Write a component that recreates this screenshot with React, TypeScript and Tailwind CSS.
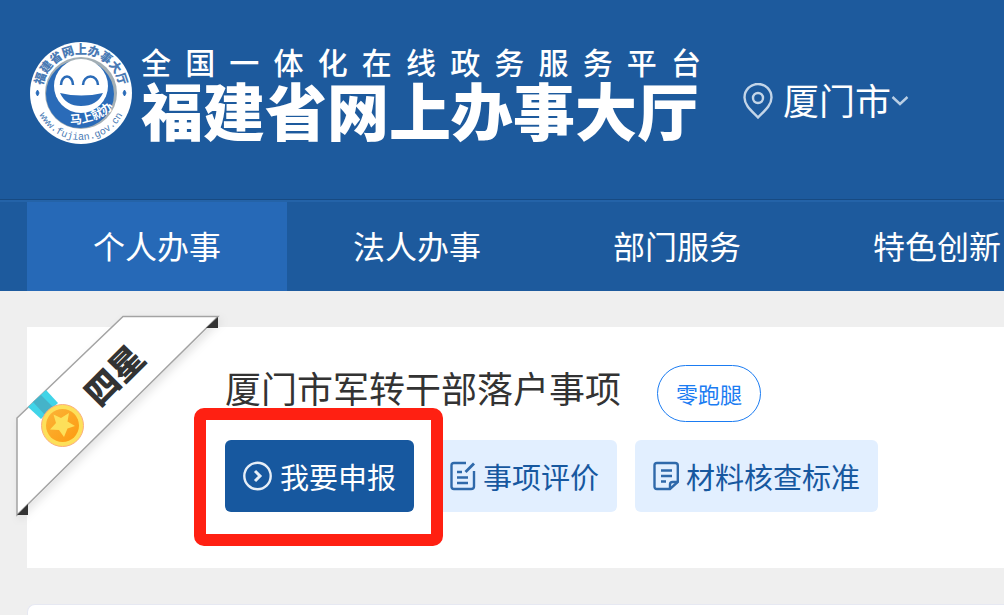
import type { ReactNode } from 'react';

const navItems = ['个人办事', '法人办事', '部门服务', '特色创新'];

function LogoIcon() {
  return (
    <svg viewBox="0 0 104 104" className="h-[104px] w-[104px] shrink-0" aria-hidden="true">
      <defs>
        <path id="ring-top" d="M 13 52 A 39 39 0 0 1 91 52" />
        <path id="ring-bottom" d="M 5 52 A 47 47 0 0 0 99 52" />
        <path id="motto" d="M 38 83 Q 68 84 88 64" />
      </defs>
      <circle cx="52" cy="52" r="51" fill="#fff" />
      <circle cx="52" cy="52" r="36" fill="#a3afb5" />
      <circle cx="51" cy="53" r="34" fill="#2a6bb8" />
      <circle cx="52" cy="45" r="27" fill="#fff" />
      <path d="M 32 44 A 6 8.500 0 0 1 44 44 M 54 44 A 7.500 8.500 0 0 1 69 44" fill="none" stroke="#2a6bb8" strokeWidth="2.5" />
      <path d="M 31 52 Q 52 57 74 52 Q 68 65 52 65 Q 37 65 31 52 Z" fill="#2a6bb8" />
      <path d="M 7 52 l1.5 -3 l1.5 3 l-1.5 3 Z M 94 52 l1.5 -3 l1.5 3 l-1.5 3 Z" fill="#2a6bb8" stroke="#2a6bb8" />
      <text fontSize="12" fontWeight="900" fill="#4a7ab4" textAnchor="middle">
        <textPath href="#ring-top" startOffset="50%">福建省网上办事大厅</textPath>
      </text>
      <text fontSize="10" fill="#4a7ab4" textAnchor="middle" fontFamily="Liberation Mono, monospace">
        <textPath href="#ring-bottom" startOffset="50%">www.fujian.gov.cn</textPath>
      </text>
      <text fontSize="12" fontWeight="700" fill="#fff">
        <textPath href="#motto" startOffset="3">马上就办</textPath>
      </text>
    </svg>
  );
}

function PinIcon() {
  return (
    <svg viewBox="0 0 30 36" className="h-9 w-[30px] shrink-0" fill="none" stroke="#c3d5e8" strokeWidth="2.4" aria-hidden="true">
      <path d="M 15 34.5 C 10 29 1.5 23 1.5 14.5 A 13.5 13.5 0 0 1 28.5 14.5 C 28.5 23 20 29 15 34.5 Z" />
      <circle cx="15" cy="15" r="5" />
    </svg>
  );
}

function ArrowCircleIcon() {
  return (
    <svg viewBox="0 0 30 30" className="h-[30px] w-[30px] shrink-0" fill="none" stroke="#e6eef7" aria-hidden="true">
      <circle cx="14.5" cy="15" r="13.2" strokeWidth="2.4" />
      <path d="M 12 10 L 17 15 L 12 20" strokeWidth="3" />
    </svg>
  );
}

function ReviewIcon() {
  return (
    <svg viewBox="0 0 26 30" className="h-[30px] w-[26px] shrink-0" fill="none" stroke="#2f69aa" strokeWidth="2.4" aria-hidden="true">
      <path d="M 16 2 H 4 Q 1.5 2 1.5 4.5 V 25.5 Q 1.5 28 4 28 H 21 Q 24 28 24 25.5 V 10" />
      <path d="M 15.5 11 L 24 2.5" strokeWidth="2.8" />
      <path d="M 7 11 H 12 M 7 16.5 H 18 M 7 22 H 18" />
    </svg>
  );
}

function StandardIcon() {
  return (
    <svg viewBox="0 0 26 30" className="h-[30px] w-[26px] shrink-0" fill="none" stroke="#2f69aa" strokeWidth="2.4" aria-hidden="true">
      <path d="M 17 28 H 4 Q 1.5 28 1.5 25.5 V 4.5 Q 1.5 2 4 2 H 22 Q 24.8 2 24.8 4.5 V 21 Z" />
      <path d="M 17 28 V 23.5 Q 17 21 19.5 21 H 24.8" />
      <path d="M 8 9.5 H 19 M 8 15 H 19 M 8 20.5 H 13" />
    </svg>
  );
}

function StarRibbon() {
  return (
    <svg viewBox="10 310 220 215" className="absolute -top-[17px] -left-[17px] h-[215px] w-[220px]" role="img" aria-label="四星">
      <defs>
        <filter id="ribbon-shadow" x="-10%" y="-10%" width="125%" height="125%">
          <feDropShadow dx="3" dy="4" stdDeviation="4" floodColor="#000" floodOpacity="0.1" />
        </filter>
        <linearGradient id="medal" x1="0" y1="0" x2="1" y2="1">
          <stop offset="0" stopColor="#fbb438" />
          <stop offset="1" stopColor="#fd9a10" />
        </linearGradient>
      </defs>
      <path d="M 123 316.5 H 218 L 17 515 V 418 Z" fill="#fff" stroke="#a3a3a3" strokeWidth="1.5" filter="url(#ribbon-shadow)" />
      <path d="M 218 317 V 328 H 206 Z M 17 515 H 28 V 504 Z" fill="#333" />
      <path d="M 28 407 L 46 390 L 58 403 L 41 419 Z" fill="#40d4e8" />
      <path d="M 33 402 L 41 395 L 53 407 L 45 415 Z" fill="#45b3c9" />
      <circle cx="62.5" cy="425.5" r="21" fill="#fde05a" stroke="#fcae7c" strokeWidth="1" />
      <circle cx="62.5" cy="425.5" r="16.5" fill="url(#medal)" />
      <path d="M 69 413 L 67.5 421.5 L 75 426 L 67.5 428.5 L 64 437 L 59 430 L 50 429.5 L 56 423 L 53.5 414.5 L 61 418 Z" fill="#fde05a" />
      <text x="113" y="374" transform="rotate(-45 113 374)" textAnchor="middle" dominantBaseline="central" fontSize="34" fontWeight="900" fill="#333">
        四星
      </text>
    </svg>
  );
}

function ActionButton({ icon, children }: { icon: ReactNode; children: ReactNode }) {
  return (
    <button
      type="button"
      className="flex h-[72px] shrink-0 items-center gap-[7px] rounded-md bg-[#e2efff] px-[18px] text-[29px] leading-9 text-[#17589f]"
    >
      {icon}
      {children}
    </button>
  );
}

export default function App() {
  return (
    <div className="flex min-h-screen flex-col overflow-hidden bg-[#efefef] font-['Noto_Sans_CJK_SC',sans-serif] font-normal whitespace-nowrap">
      <header className="border-b border-[#174a82] bg-[#1d5a9d] pt-[41px] pb-[54px] text-white">
        <div className="flex items-center pl-[29px]">
          <LogoIcon />
          <h1 className="ml-2 w-[560px] shrink-0">
            <span className="block text-[30px] leading-8 font-medium [text-align-last:justify]">全国一体化在线政务服务平台</span>
            <span className="block text-[62px] leading-[64px] font-black">福建省网上办事大厅</span>
          </h1>
          <button type="button" className="ml-[42px] flex shrink-0 items-center pt-4 text-[36px] leading-10">
            <PinIcon />
            <span className="ml-[10px] pb-1">厦门市</span>
            <svg viewBox="0 0 18 12" className="h-3 w-[18px]" fill="none" stroke="#b9cee4" strokeWidth="2.4" aria-hidden="true">
              <path d="M 1.5 2 L 9 9 L 16.5 2" />
            </svg>
          </button>
        </div>
      </header>

      <nav className="flex border-t-2 border-[#2463a8] bg-[#1d5a9d] pl-[27px] text-[32px] leading-10 text-white">
        {navItems.map((item, i) => (
          <a
            key={item}
            href="#"
            className={`flex h-[89px] w-[260px] shrink-0 items-center justify-center pb-1 ${i === 0 ? 'bg-[#2669b7]' : ''}`}
          >
            {item}
          </a>
        ))}
      </nav>

      <main className="flex grow flex-col pt-9 pl-[27px]">
        <section className="relative bg-white pt-[38px] pb-14 pl-[198px]">
          <StarRibbon />
          <div className="flex items-start gap-9">
            <h2 className="text-[36px] leading-[44px] text-[#333]">厦门市军转干部落户事项</h2>
            <span className="rounded-full border border-[#1b7cf2] px-[18px] pt-[11px] pb-3 text-[22px] leading-8 text-[#1b7cf2]">零跑腿</span>
          </div>
          <div className="mt-[18px] flex gap-[18px]">
            <div className="relative z-10 shrink-0">
              <button
                type="button"
                className="flex h-[72px] items-center gap-[7px] rounded-md bg-[#17589f] px-[18px] text-[29px] leading-9 text-white"
              >
                <ArrowCircleIcon />
                我要申报
              </button>
              <div className="pointer-events-none absolute -top-8 -right-[29px] -bottom-[34px] -left-[31px] rounded-[10px] border-12 border-[#ff2012]" />
            </div>
            <ActionButton icon={<ReviewIcon />}>事项评价</ActionButton>
            <ActionButton icon={<StandardIcon />}>材料核查标准</ActionButton>
          </div>
        </section>
        <section className="mt-9 grow rounded-tl-lg border-t border-l border-[#e6e8f2] bg-white" />
      </main>
    </div>
  );
}
